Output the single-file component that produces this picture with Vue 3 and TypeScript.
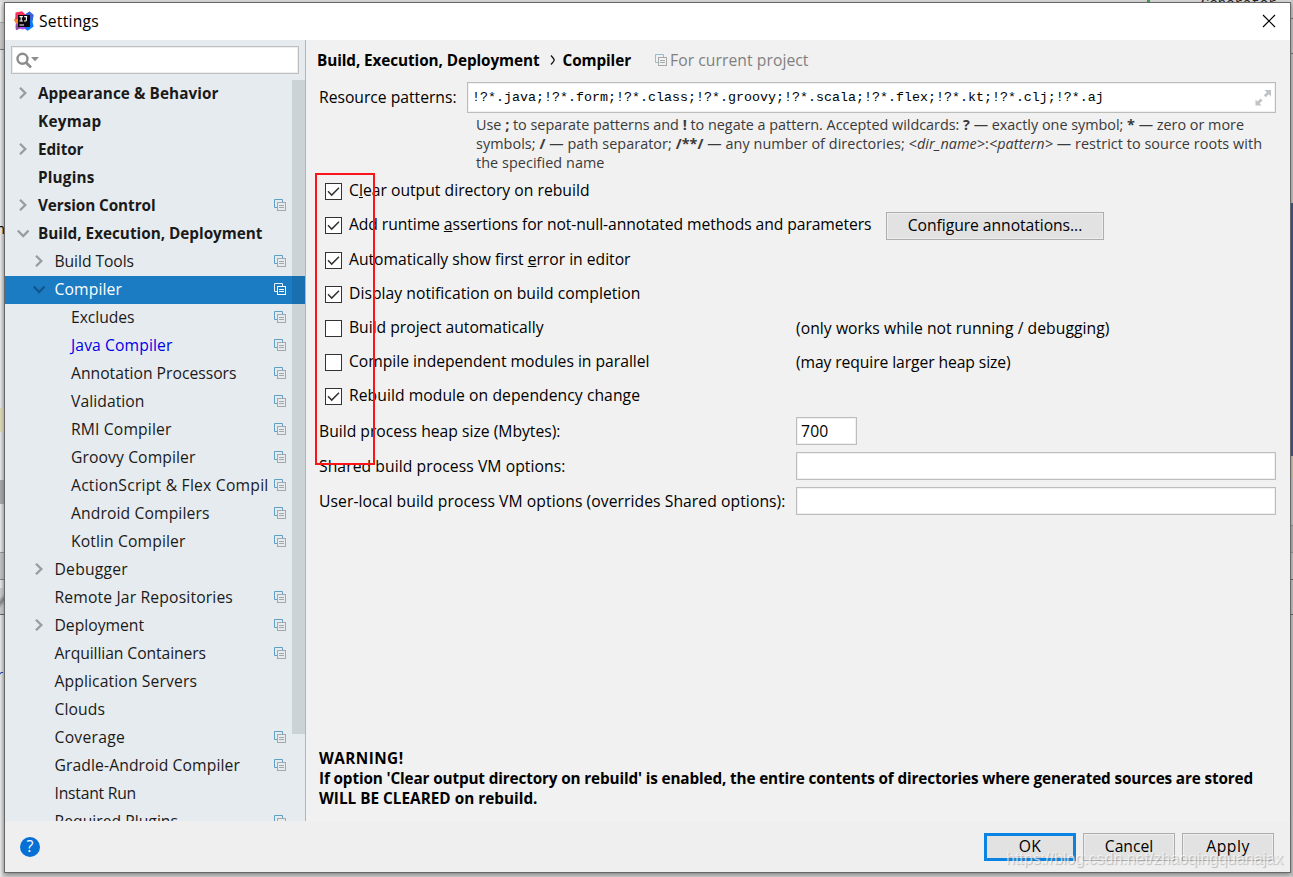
<script setup lang="ts">
interface TreeItem {
  label: string
  level: number
  width: number
  arrow?: 'right' | 'down'
  project?: boolean
  bold?: boolean
  selected?: boolean
  link?: boolean
}

interface Option {
  before: string
  key?: string
  after?: string
  width: number
  checked: boolean
  note?: string
  noteWidth?: number
  button?: boolean
}

// Spreads the letters of a label so that it takes up the given width, less the side bearings.
const vFit = {
  mounted(el: HTMLElement, binding: { value: number }) {
    const natural = el.getBoundingClientRect().width
    const count = (el.textContent ?? '').length
    if (count > 0) el.style.letterSpacing = `${(binding.value - 1.5 - natural) / count}px`
  },
}

const tree: TreeItem[] = [
  { label: 'Appearance & Behavior', level: 0, width: 182, arrow: 'right', bold: true },
  { label: 'Keymap', level: 0, width: 65, bold: true },
  { label: 'Editor', level: 0, width: 47, arrow: 'right', bold: true },
  { label: 'Plugins', level: 0, width: 58, bold: true },
  { label: 'Version Control', level: 0, width: 119, arrow: 'right', bold: true, project: true },
  { label: 'Build, Execution, Deployment', level: 0, width: 226, arrow: 'down', bold: true },
  { label: 'Build Tools', level: 1, width: 81, arrow: 'right', project: true },
  { label: 'Compiler', level: 1, width: 69, arrow: 'down', project: true, selected: true },
  { label: 'Excludes', level: 2, width: 65, project: true },
  { label: 'Java Compiler', level: 2, width: 103, project: true, link: true },
  { label: 'Annotation Processors', level: 2, width: 167, project: true },
  { label: 'Validation', level: 2, width: 75, project: true },
  { label: 'RMI Compiler', level: 2, width: 102, project: true },
  { label: 'Groovy Compiler', level: 2, width: 126, project: true },
  { label: 'ActionScript & Flex Compil', level: 2, width: 199, project: true },
  { label: 'Android Compilers', level: 2, width: 140, project: true },
  { label: 'Kotlin Compiler', level: 2, width: 116, project: true },
  { label: 'Debugger', level: 1, width: 75, arrow: 'right' },
  { label: 'Remote Jar Repositories', level: 1, width: 180, project: true },
  { label: 'Deployment', level: 1, width: 91, arrow: 'right', project: true },
  { label: 'Arquillian Containers', level: 1, width: 153, project: true },
  { label: 'Application Servers', level: 1, width: 144 },
  { label: 'Clouds', level: 1, width: 52 },
  { label: 'Coverage', level: 1, width: 72, project: true },
  { label: 'Gradle-Android Compiler', level: 1, width: 187, project: true },
  { label: 'Instant Run', level: 1, width: 83 },
  { label: 'Required Plugins', level: 1, width: 125, project: true },
]

const options: Option[] = [
  { before: 'C', key: 'l', after: 'ear output directory on rebuild', width: 242, checked: true },
  { before: 'Add runtime ', key: 'a', after: 'ssertions for not-null-annotated methods and parameters', width: 524, checked: true, button: true },
  { before: 'Automatically show first ', key: 'e', after: 'rror in editor', width: 283, checked: true },
  { before: 'Display notification on build completion', width: 293, checked: true },
  { before: 'Build project automatically', width: 196, checked: false, note: '(only works while not running / debugging)', noteWidth: 315 },
  { before: 'Compile independent modules in parallel', width: 302, checked: false, note: '(may require larger heap size)', noteWidth: 216 },
  { before: 'Rebuild module on dependency change', width: 292.5, checked: true },
]

const patterns = '!?*.java;!?*.form;!?*.class;!?*.groovy;!?*.scala;!?*.flex;!?*.kt;!?*.clj;!?*.aj'
</script>

<template>
  <div class="screen">
    <div class="edge left">
      <i class="l-tab"></i><i class="l-yellow"></i><i class="l-grey"></i><i class="l-bar"></i><i class="l-lines"></i>
      <span class="l-m">m</span><span class="l-r">r</span>
    </div>
    <div class="edge top"><i class="green"></i><span>Generator</span></div>
    <div class="edge right"><i class="r-tab"></i><i class="r-blue"></i><i class="r-yellow"></i><i class="r-bar"></i><i class="r-lines"></i></div>

    <div class="dialog">
      <header class="titlebar">
        <svg class="logo" width="20" height="20" viewBox="0 0 20 20">
          <path d="M1.5 1.5 8 .3 11 3v6L3 12 .3 9.5l1-2.5z" fill="#f5315d" />
          <path d="M0 8.500 4 8v5H2z" fill="#fb8a1e" />
          <path d="M11 3.500 15.500.500l4 3.500-1 7 1.200 4.500-6 4.200L8 16z" fill="#087cfa" />
          <path d="M11 3.500 15.500.500l4 3.500-.8 5H12z" fill="#3b62d8" />
          <path d="M2 12.500h4l6 5-3.500 1-2.500-1L2 19.300 1.500 16z" fill="#b74af7" />
          <path d="M1.800 13 5 15l1.500 2.300L2 19z" fill="#91519b" />
          <rect x="4" y="4" width="12" height="12" fill="#0a0508" />
          <path d="M5.500 5.600h3.400M7.200 5.600v4.400M5.500 10h3.400M10.200 5.600h3M12.400 5.600v3.100q0 1.300-1.300 1.300H10M5.500 14h4.500" stroke="#fff" stroke-width="1.100" fill="none" />
        </svg>
        <span v-fit="61.5" class="text title">Settings</span>
        <svg class="close" width="14" height="14" viewBox="0 0 14 14"><path d="M1 1l12 12M13 1L1 13" stroke="#000" stroke-width="1.200" /></svg>
      </header>

      <div class="body">
        <aside class="sidebar">
          <div class="search">
            <svg width="24" height="17" viewBox="0 0 24 17">
              <circle cx="7.500" cy="6.800" r="5" fill="none" stroke="#8c8c8c" stroke-width="2.400" />
              <path d="M11 10.500l5 5" stroke="#8c8c8c" stroke-width="2.600" />
              <path d="M16 5h8l-4 4.200z" fill="#8c8c8c" />
            </svg>
          </div>
          <div class="tree">
            <div
              v-for="item in tree"
              :key="item.label"
              class="row"
              :class="['level-' + item.level, { bold: item.bold, selected: item.selected, link: item.link }]"
            >
              <span class="arrow">
                <svg v-if="item.arrow === 'right'" width="12" height="12" viewBox="0 0 12 12"><path d="M3 0.800l5.300 5.200L3 11.200" fill="none" stroke="#999c9f" stroke-width="2.300" /></svg>
                <svg v-if="item.arrow === 'down'" width="12" height="12" viewBox="0 0 12 12"><path d="M.8 3.500L6.200 9l5.400-5.500" fill="none" :stroke="item.selected ? '#12568d' : '#999c9f'" stroke-width="2.300" /></svg>
              </span>
              <span class="label"><span v-fit="item.width" class="text">{{ item.label }}</span></span>
              <svg v-if="item.project" class="copy" width="12" height="12" viewBox="0 0 12 12">
                <path d="M3 8.500H.500V.500h8V3" fill="none" :stroke="item.selected ? '#e6f1fa' : '#5f9fc2'" />
                <rect x="3.500" y="3.500" width="8" height="8" fill="none" :stroke="item.selected ? '#fff' : '#a3a8ac'" />
                <path d="M5 6.500h5M5 8.500h5" :stroke="item.selected ? '#fff' : '#a3a8ac'" />
              </svg>
            </div>
          </div>
          <div class="scrollbar"></div>
        </aside>

        <main class="content">
          <div class="crumbs">
            <b v-fit="224" class="text">Build, Execution, Deployment</b>
            <svg class="sep" width="6" height="12" viewBox="0 0 6 12"><path d="M1 1.500q3.200 3.500 3.200 4.500T1 10.500" fill="none" stroke="#111" stroke-width="1.300" /></svg>
            <b v-fit="70" class="text">Compiler</b>
            <svg class="crumb-copy" width="12" height="12" viewBox="0 0 12 12">
              <path d="M3 8.500H.500V.500h8V3" fill="none" stroke="#92bed5" />
              <rect x="3.500" y="3.500" width="8" height="8" fill="none" stroke="#a8a8a8" />
              <path d="M5 6.500h5M5 8.500h5" stroke="#a8a8a8" />
            </svg>
            <span v-fit="140" class="text muted">For current project</span>
          </div>

          <div class="resource">
            <span class="resource-label"><span v-fit="139" class="text">Resource patterns:</span></span>
            <div class="field patterns">
              <span class="mono">{{ patterns }}</span>
              <svg width="16" height="16" viewBox="0 0 16 16" fill="#bfc3c6">
                <path d="M9.500 0H16v6.500l-2.200-2.200-3 3L8.800 5.200l3-3zM6.500 15.500H.500v-6l2 2 3-3 2 2-3 3z" />
              </svg>
            </div>
          </div>

          <div class="hint">
            <div><span v-fit="769.5" class="text">Use <b>;</b> to separate patterns and <b>!</b> to negate a pattern. Accepted wildcards: <b>?</b> — exactly one symbol; <b>*</b> — zero or more</span></div>
            <div><span v-fit="787.5" class="text">symbols; <b>/</b> — path separator; <b>/**/</b> — any number of directories; <i>&lt;dir_name&gt;</i>:<i>&lt;pattern&gt;</i> — restrict to source roots with</span></div>
            <div><span v-fit="130" class="text">the specified name</span></div>
          </div>

          <div class="options">
            <div v-for="opt in options" :key="opt.before" class="option">
              <span class="box">
                <svg v-if="opt.checked" width="15" height="15" viewBox="0 0 15 15"><path d="M2 7.300l3.700 3.800L13 3.800" fill="none" stroke="#333" stroke-width="1.500" /></svg>
              </span>
              <span class="caption"><span v-fit="opt.width" class="text">{{ opt.before }}<u v-if="opt.key">{{ opt.key }}</u>{{ opt.after }}</span></span>
              <button v-if="opt.button" class="btn configure"><span v-fit="176" class="text">Configure annotations...</span></button>
              <span v-if="opt.note" class="note"><span v-fit="opt.noteWidth" class="text">{{ opt.note }}</span></span>
            </div>
            <div class="marker"></div>
          </div>

          <div class="form">
            <span><span v-fit="243" class="text">Build process heap size (Mbytes):</span></span>
            <div class="field heap"><span v-fit="29" class="text">700</span></div>
            <span><span v-fit="248" class="text">Shared build process VM options:</span></span>
            <div class="field"></div>
            <span><span v-fit="468" class="text">User-local build process VM options (overrides Shared options):</span></span>
            <div class="field"></div>
          </div>

          <div class="warning">
            <div><span v-fit="86" class="text">WARNING!</span></div>
            <div><span v-fit="935.5" class="text">If option 'Clear output directory on rebuild' is enabled, the entire contents of directories where generated sources are stored</span></div>
            <div><span v-fit="220" class="text">WILL BE CLEARED on rebuild.</span></div>
          </div>
        </main>
      </div>

      <footer class="footer">
        <div class="help"><span>?</span></div>
        <button class="btn primary"><span v-fit="24" class="text">OK</span></button>
        <button class="btn"><span v-fit="50" class="text">Cancel</span></button>
        <button class="btn"><span v-fit="45" class="text">Apply</span></button>
      </footer>
    </div>
    <div class="watermark"><span v-fit="278.5" class="text">https://blog.csdn.net/zhaoqingquanajax</span></div>
  </div>
</template>

<style>
body { margin: 0; overflow: hidden; }
</style>

<style scoped>
* { box-sizing: border-box; }
.screen {
  position: relative;
  width: 1293px;
  height: 877px;
  padding: 2px 2px 4px 4px;
  overflow: hidden;
  background: #d6d6d6;
  font-family: "Open Sans", "Noto Sans", sans-serif;
  font-size: 15.7px;
  color: #000;
}
.text { display: inline-block; white-space: pre; }
b, .bold, .warning { font-size: 15.300px; }
.edge { position: absolute; overflow: hidden; }
.edge i, .edge span { position: absolute; display: block; }
.edge.left { left: 0; top: 0; width: 4px; height: 877px; background: linear-gradient(90deg, #ededed, #cfcfcf); }
.l-tab { top: 22px; width: 4px; height: 28px; border-top: 1px solid #aaa; border-bottom: 1px solid #777; background: #cacaca; }
.l-yellow { top: 408px; width: 4px; height: 24px; background: #dedcba; }
.l-grey { top: 480px; width: 4px; height: 24px; background: #ababab; }
.l-bar { top: 552px; width: 4px; height: 28px; border-top: 1px solid #999; border-bottom: 1px solid #888; background: #c4c4c4; }
.l-lines { top: 588px; width: 4px; height: 27px; border-bottom: 1px solid #666; background: linear-gradient(135deg, #ccc 30%, #888 50%, #ccc 70%); }
.l-m { top: 219px; left: -8px; font-size: 14px; }
.l-r { top: 665px; left: -3px; font-size: 14px; font-style: italic; color: #1a1a99; }
.edge.top { left: 0; top: 0; width: 1293px; height: 2px; background: #dadada; }
.edge.top .green { left: 1147px; width: 3px; height: 2px; background: #35a853; }
.edge.top span { left: 1201px; top: -3px; font: 14px/14px "Liberation Mono", monospace; color: #222; }
.edge.right { right: 0; top: 0; width: 2px; height: 877px; background: #c9c9c9; }
.r-tab { top: 18px; width: 2px; height: 36px; border-top: 1px solid #777; border-bottom: 1px solid #777; }
.r-blue { top: 203px; width: 2px; height: 253px; background: #43598c; }
.r-yellow { top: 456px; width: 2px; height: 23px; background: #cfc8ab; }
.r-bar { top: 525px; width: 2px; height: 28px; border-top: 1px solid #999; border-bottom: 1px solid #999; background: #b9b9b9; }
.r-lines { top: 579px; width: 2px; height: 36px; border-top: 1px solid #666; border-bottom: 1px solid #666; }

.dialog {
  position: relative;
  display: flex;
  flex-direction: column;
  width: 1287px;
  height: 871px;
  border: 1px solid #686868;
  background: #f1f1f1;
  box-shadow: 0 2px 5px rgba(0, 0, 0, .4);
}
.titlebar { display: flex; align-items: center; height: 37px; padding: 0 14px 2px 9px; background: #fff; }
.logo { flex: none; }
.title { margin-left: 5px; }
.close { margin-left: auto; }
.body { display: flex; height: 781px; }
.sidebar {
  position: relative;
  display: flex;
  flex-direction: column;
  flex: none;
  width: 301px;
  height: 781px;
  overflow: hidden;
  border-right: 1px solid #b4b4b4;
  background: #e6ebef;
}
.search {
  display: flex;
  align-items: center;
  flex: none;
  height: 28px;
  margin: 6px;
  padding-left: 3px;
  border: 1px solid #bdbfc0;
  background: #fff;
  box-shadow: inset 0 0 0 1px #eee;
}
.tree { flex: none; }
.row { display: flex; align-items: center; height: 28px; padding-left: 12px; color: #1a1a1a; }
.row.level-1 { padding-left: 28px; }
.row.level-2 { padding-left: 44px; }
.row.bold { font-weight: 700; }
.row.link { color: #0000e6; }
.row.selected { background: #1b7cc4; color: #fff; }
.arrow { display: flex; flex: none; width: 20px; padding-bottom: 2px; }
.label { flex: 1; min-width: 0; line-height: 26px; height: 28px; padding-left: 1px; }
.level-1 .label { padding-left: 1.500px; }
.level-2 .label { padding-left: 2px; }
.copy { flex: none; margin-right: 19px; margin-bottom: 2px; }
.scrollbar { position: absolute; right: 0; top: 40px; width: 13px; height: 654px; background: rgba(0, 20, 30, .11); }

.content { display: flex; flex-direction: column; flex: 1; padding: 0 14px 0 13px; }
.crumbs { display: flex; align-items: center; height: 42px; padding-bottom: 2px; margin-left: -2px; line-height: 40px; flex: none; }
.crumbs .sep { margin: 0 7px 0 10px; }
.crumb-copy { margin: 0 3px 0 24px; }
.muted { color: #808080; }
.resource { display: flex; height: 31px; flex: none; line-height: 30px; }
.resource-label { width: 148px; flex: none; }
.field { border: 1px solid #bdbdbd; background: #fff; box-shadow: inset 0 0 0 1px #f0f0f0; }
.patterns { display: flex; align-items: center; flex: 1; padding: 0 4px 0 4px; }
.mono { flex: 1; font: 13.330px/28px "Liberation Mono", monospace; white-space: pre; }
.hint { margin: 2px 0 1px 157px; height: 58px; flex: none; font-size: 14.400px; line-height: 19px; color: #3a3a3a; }
.hint b { font-size: 14.400px; }
.hint > div { height: 19px; }
.hint .text { line-height: 19px; vertical-align: top; }
.options {
  position: relative;
  display: grid;
  grid-template-rows: 34px 35px 34px 34px 34px 34px 34px;
  flex: none;
}
.option { display: flex; align-items: flex-start; padding-left: 6px; }
.box { flex: none; width: 17px; height: 17px; margin-top: 9px; border: 1px solid #333; background: #fff; line-height: 0; }
.caption { margin-left: 7px; width: 447px; line-height: 33px; white-space: nowrap; }
.note { line-height: 34px; }
.marker { position: absolute; left: -4px; top: -1px; width: 60px; height: 292px; border: 2px solid #fb1418; }
.btn {
  display: flex;
  align-items: center;
  justify-content: center;
  width: 92px;
  height: 28px;
  padding: 0 0 2px;
  border: 1px solid #adadad;
  background: #e2e2e2;
  box-shadow: inset 0 0 0 1px #eee;
  font: inherit;
  color: #000;
}
.configure { width: 218px; margin: 4px 0 0 90px; }
.primary { border: 3px solid #0b83e2; box-shadow: none; padding-bottom: 2px; }
.form {
  display: grid;
  grid-template-columns: 477px 1fr;
  grid-auto-rows: 28px;
  row-gap: 7px;
  margin-top: 4px;
  line-height: 28px;
  flex: none;
}
.heap { width: 61px; padding-left: 4px; line-height: 26px; }
.warning { margin-top: auto; padding-bottom: 13px; font-weight: 700; line-height: 20px; }
.warning > div { height: 20px; }
.footer { display: flex; align-items: center; gap: 7px; flex: 1; padding: 0 16px 0 15px; background: #efefef; }
.help {
  display: flex;
  align-items: center;
  justify-content: center;
  width: 20px;
  height: 20px;
  margin-right: auto;
  border-radius: 50%;
  background: #0670d4;
  color: #fff;
  font-size: 16px;
  line-height: 18px;
  padding-bottom: 1px;
}
.watermark {
  position: absolute;
  left: 1006px;
  top: 849px;
  line-height: 20px;
  font-family: "Liberation Sans", sans-serif;
  font-size: 16px;
  color: rgba(255, 255, 255, .6);
  text-shadow: 1px 1px 1px rgba(120, 120, 120, .45);
}
</style>
